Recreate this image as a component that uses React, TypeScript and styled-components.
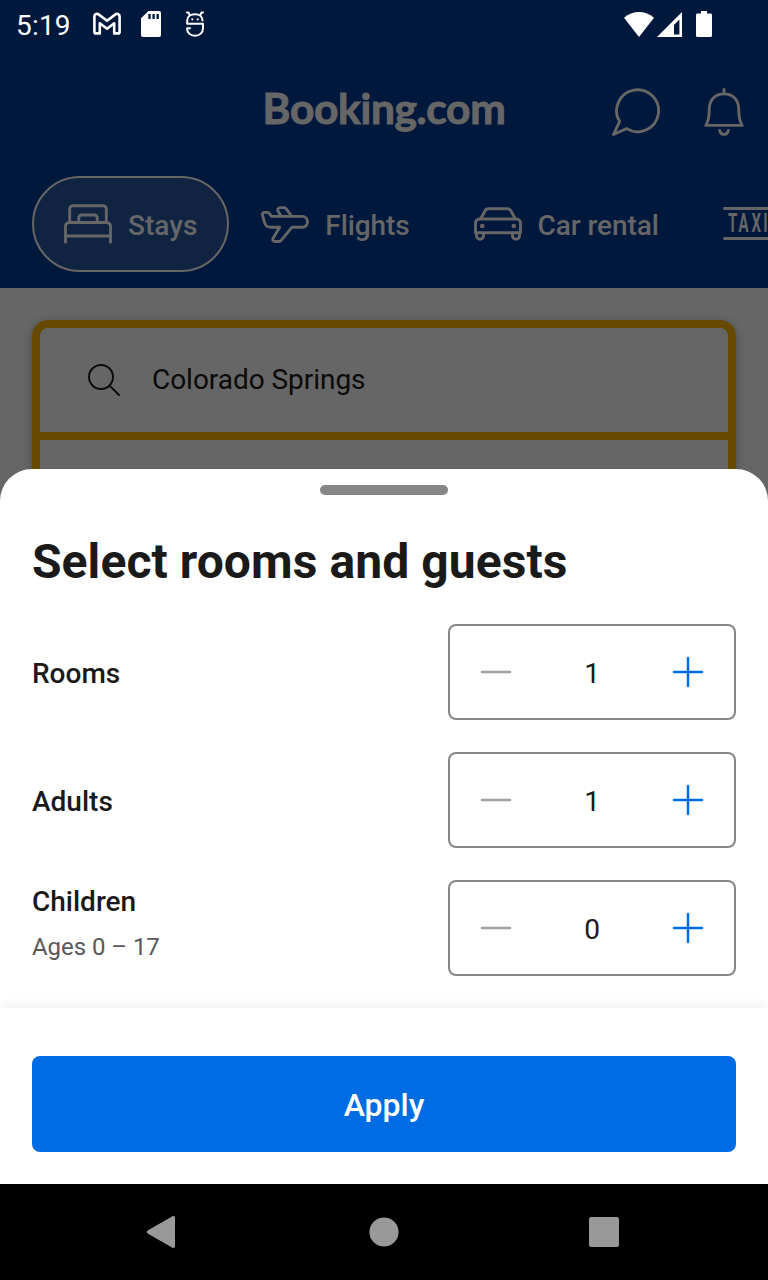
import React, { useState } from "react";
import styled, { createGlobalStyle } from "styled-components";

const GlobalStyle = createGlobalStyle`
  * { box-sizing: border-box; }
  body { margin: 0; background: #000; font-family: Roboto, "Liberation Sans", sans-serif; }
  svg { display: block; flex: none; }
`;

const Screen = styled.div`
  position: relative;
  display: flex;
  flex-direction: column;
  width: 768px;
  height: 1280px;
  overflow: hidden;
  background: #666666;
`;

const Backdrop = styled.div`
  flex: 1;
  min-height: 0;
  overflow: hidden;
`;

const Header = styled.header`
  height: 288px;
  background: #00183c;
  color: #666666;
`;

const StatusBar = styled.div`
  display: flex;
  align-items: center;
  justify-content: space-between;
  height: 48px;
  padding: 0 56px 0 16px;
  color: #fff;
`;

const StatusGroup = styled.div<{ $gap?: number }>`
  display: flex;
  align-items: center;
  gap: ${(p) => p.$gap ?? 0}px;
`;

const Clock = styled.span`
  width: 77px;
  padding-top: 3px;
  font-size: 28px;
  line-height: 45px;
  letter-spacing: 0.2px;
`;

const TopBar = styled.div`
  display: grid;
  grid-template-columns: 1fr 260px 1fr;
  align-items: center;
  height: 128px;
  padding: 0 20px;
`;

const Logo = styled.h1`
  grid-column: 2;
  margin: 0 0 8px;
  font-family: Lato, sans-serif;
  font-size: 42.5px;
  line-height: 56px;
  font-weight: 700;
  letter-spacing: -0.35px;
  text-align: center;
  white-space: nowrap;
  -webkit-text-stroke: 1px currentColor;
`;

const TopActions = styled.div`
  display: flex;
  justify-content: flex-end;
  gap: 40px;
`;

const Tabs = styled.nav`
  display: flex;
  width: 900px;
  padding-left: 32px;
`;

const Tab = styled.div<{ $active?: boolean }>`
  display: flex;
  align-items: center;
  gap: 16px;
  height: 96px;
  padding: 0 ${(p) => (p.$active ? "30px" : "32px")};
  border: ${(p) => (p.$active ? "2px solid #666666" : "0")};
  border-radius: 48px;
  background: ${(p) => (p.$active ? "#102442" : "transparent")};
  letter-spacing: ${(p) => (p.$active ? "0" : "-0.08px")};
  font-size: 28px;
  font-weight: 500;
  line-height: 40px;
  white-space: nowrap;
`;

const TabLabel = styled.span`
  padding-top: 3px;
`;

const SearchCard = styled.section`
  margin: 32px 32px 0;
  height: 300px;
  border: 8px solid #664900;
  border-radius: 16px;
  box-shadow: 0 2px 8px rgba(0, 0, 0, 0.3);
`;

const SearchField = styled.div`
  display: flex;
  align-items: center;
  gap: 32px;
  height: 112px;
  padding-left: 48px;
  border-bottom: 8px solid #664900;
  color: #0a0a0a;
  font-size: 28px;
  line-height: 40px;
  letter-spacing: -0.04px;
`;

const Sheet = styled.section`
  position: absolute;
  left: 0;
  right: 0;
  bottom: 96px;
  height: 715px;
  display: flex;
  flex-direction: column;
  padding-top: 16px;
  border-radius: 32px 32px 0 0;
  background: #fff;
  color: #1a1a1a;
`;

const Handle = styled.div`
  width: 128px;
  height: 10px;
  margin: 0 auto;
  border-radius: 5px;
  background: #868686;
`;

const Title = styled.h2`
  margin: 39px 32px 34px;
  font-size: 48px;
  line-height: 56px;
  font-weight: 700;
  letter-spacing: 0.07px;
`;

const Rows = styled.div`
  display: flex;
  flex-direction: column;
  gap: 32px;
  padding: 0 32px 32px;
`;

const Row = styled.div`
  display: flex;
  align-items: center;
  justify-content: space-between;
  height: 96px;
`;

const RowText = styled.div<{ $tall: boolean }>`
  padding: ${(p) => (p.$tall ? "0 0 9px" : "3px 0 0")};
`;

const Label = styled.div`
  font-size: 28px;
  line-height: 40px;
  font-weight: 500;
`;

const Hint = styled.div`
  margin-top: 7px;
  color: #595959;
  font-size: 24px;
  line-height: 36px;
  letter-spacing: -0.05px;
`;

const Stepper = styled.div`
  display: grid;
  grid-template-columns: 92px 1fr 92px;
  align-items: center;
  width: 288px;
  height: 96px;
  border: 2px solid #868686;
  border-radius: 8px;
`;

const StepButton = styled.button<{ $muted?: boolean }>`
  display: flex;
  align-items: center;
  justify-content: center;
  height: 92px;
  padding: 0;
  border: 0;
  background: none;
  color: ${(p) => (p.$muted ? "#a2a2a2" : "#006ce4")};
`;

const Count = styled.span`
  padding-top: 3px;
  font-size: 28px;
  line-height: 40px;
  text-align: center;
`;

const Footer = styled.footer`
  flex: 1;
  padding: 48px 32px 32px;
  background: #fff;
  box-shadow: 0 0 12px rgba(0, 0, 0, 0.09);
`;

const ApplyButton = styled.button`
  width: 100%;
  height: 96px;
  padding: 2px 0 0;
  border: 0;
  border-radius: 8px;
  background: #006ce4;
  color: #fff;
  font: 500 32px/48px Roboto, sans-serif;
`;

const NavBar = styled.div`
  display: flex;
  align-items: center;
  justify-content: space-between;
  height: 96px;
  padding: 0 149px 0 146px;
  background: #000;
`;

const line = (w: number) => ({
  fill: "none",
  stroke: "currentColor",
  strokeWidth: w,
  strokeLinecap: "round" as const,
  strokeLinejoin: "round" as const,
});

const MailIcon = () => (
  <svg width="28" height="24" viewBox="0 0 28 24" {...line(2.6)}>
    <path d="M1.400 4.500C1.400 1.900 4.200 1.200 5.900 2.600L14 8.800l8.100-6.200c1.700-1.400 4.500-.7 4.500 1.900v15.400c0 .9-.7 1.500-1.500 1.500h-3.900V11.200L14 16.700l-7.200-5.500v10.200H2.900c-.8 0-1.500-.6-1.500-1.500z" />
  </svg>
);

const SdIcon = () => (
  <svg width="20" height="26" viewBox="0 0 20 26">
    <path fill="#fff" d="M7.500 0H18a2 2 0 0 1 2 2v22a2 2 0 0 1-2 2H2a2 2 0 0 1-2-2V7.200z" />
    <path stroke="#00183c" strokeWidth="2.300" d="M8.500 3v5M12.600 3v5M16.700 3v5" />
  </svg>
);

const MascotIcon = () => (
  <svg width="18" height="26" viewBox="0 0 18 26" {...line(2)}>
    <path d="M16.500 9.600C16.500 5.500 13.300 3.200 9 3.200S1.200 5.500 1.200 9.600v3.200H17v4.400c0 4.400-3.300 7.600-8 7.600s-8-3.200-8-7.600h3" />
    <path strokeWidth="1.900" d="M1 1.500h1.500L3.700 4M17 1.500h-1.500L14.300 4" />
    <path d="M6.300 8.300v.1M11.700 8.300v.1" />
  </svg>
);

const WifiIcon = () => (
  <svg width="30" height="25" viewBox="0 0 30 25" fill="#fff">
    <path d="M0 5.800C8.500-1.900 21.500-1.900 30 5.800L15 25z" />
  </svg>
);

const SignalIcon = () => (
  <svg width="25" height="25" viewBox="0 0 25 25" fill="#fff">
    <path fillRule="evenodd" d="M25 0v25H0zM22.400 7.500L17 13v9.500h5.400z" />
  </svg>
);

const BatteryIcon = () => (
  <svg width="16" height="26" viewBox="0 0 16 26" fill="#fff">
    <path d="M5 0h6v2.600h3.500c.9 0 1.500.6 1.500 1.500v20.400c0 .9-.6 1.500-1.500 1.500h-13C.6 26 0 25.400 0 24.500V4.100c0-.9.6-1.500 1.500-1.500H5z" />
  </svg>
);

const ChatIcon = () => (
  <svg width="48" height="48" viewBox="0 0 48 48" {...line(2.9)}>
    <path d="M14.500 40.600A21 21 0 1 0 7.600 33.600L1.500 46.500z" />
  </svg>
);

const BellIcon = () => (
  <svg width="48" height="48" viewBox="0 0 48 48" {...line(2.9)}>
    <path d="M24 1.500v4.300M9.300 20.700C9.300 11.800 15.200 5.900 24 5.900s14.700 5.900 14.700 14.800c0 8.500 1.200 13 3.500 16.700H5.800c2.300-3.700 3.500-8.200 3.500-16.700zM19.700 42.500c.5 2.700 2.200 4 4.300 4s3.800-1.300 4.300-4" />
  </svg>
);

const BedIcon = () => (
  <svg width="48" height="48" viewBox="0 0 48 48" {...line(2.9)}>
    <path d="M5.700 22.500V8.800a3 3 0 0 1 3-3h30.600a3 3 0 0 1 3 3v13.700M14.700 22.500V18a3 3 0 0 1 3-3h12.600a3 3 0 0 1 3 3v4.500M1.500 42.300v-16a3.800 3.800 0 0 1 3.800-3.800h37.400a3.800 3.800 0 0 1 3.800 3.800v16M1.500 36h45" />
  </svg>
);

const PlaneIcon = () => (
  <svg width="48" height="48" viewBox="0 0 48 48" {...line(2.9)}>
    <path d="M10.600 16.400L8.200 13.400c-.5-.7-1.100-1-1.900-1H3.700c-1.600 0-2.600 1.200-2.200 2.700l2.200 7.700c.9 3 2.800 4.400 6 4.400h8.900l-6.500 11c-1 1.700.1 3.300 2 3.300h3.800c1 0 1.800-.4 2.500-1.300l10.600-13h10.200c3.200 0 5.300-2.300 5.300-5.400s-2.100-5.400-5.300-5.400zM20.300 16.400l-3.200-5.200c-1-1.700.1-3.600 2.100-3.600h3.700c1 0 1.800.4 2.400 1.200l5.500 7.600" />
  </svg>
);

const CarIcon = () => (
  <svg width="48" height="48" viewBox="0 0 48 48" {...line(2.9)}>
    <path d="M6.800 18.700l4-7.500c.8-1.600 1.900-2.400 3.600-2.400h19.200c1.700 0 2.800.8 3.600 2.400l4 7.500M5.500 19h37a4 4 0 0 1 4 4v9.800h-45V23a4 4 0 0 1 4-4zM2.500 32.800v2.900a3.500 3.500 0 0 0 7 0v-2.900M38.500 32.800v2.900a3.500 3.500 0 0 0 7 0v-2.900" />
    <circle cx="8.200" cy="26" r="2.300" fill="currentColor" stroke="none" />
    <circle cx="39.800" cy="26" r="2.300" fill="currentColor" stroke="none" />
  </svg>
);

const TaxiIcon = () => (
  <svg width="48" height="48" viewBox="0 0 48 48">
    <path {...line(2.9)} d="M1.500 8.500h45M1.500 38.500h45" />
    <text transform="scale(0.6 1)" x="8.5 26 47.300 67" y="32.500" fontSize="25" fontWeight="700" letterSpacing="0" fill="currentColor">TAXI</text>
  </svg>
);

const SearchIcon = () => (
  <svg width="32" height="32" viewBox="0 0 32 32" {...line(1.900)}>
    <circle cx="13" cy="13" r="12" />
    <path d="M21.800 21.800L31 31" />
  </svg>
);

const MinusIcon = () => (
  <svg width="32" height="32" viewBox="0 0 32 32" {...line(2.500)}>
    <path d="M2 16h28" />
  </svg>
);

const PlusIcon = () => (
  <svg width="32" height="32" viewBox="0 0 32 32" {...line(2.500)}>
    <path d="M2 16h28M16 2v28" />
  </svg>
);

const BackIcon = () => (
  <svg width="33" height="32" viewBox="0 0 33 32" fill="#999">
    <path d="M1.600 14.600L26.500.300c1.200-.700 2.500 0 2.500 1.400v28.600c0 1.400-1.300 2.100-2.500 1.400L1.600 17.400c-1.200-.700-1.200-2.100 0-2.800z" />
  </svg>
);

const HomeIcon = () => (
  <svg width="30" height="30" viewBox="0 0 30 30">
    <circle cx="15" cy="15" r="14.600" fill="#999" />
  </svg>
);

const RecentIcon = () => (
  <svg width="30" height="30" viewBox="0 0 30 30">
    <rect width="30" height="30" rx="2.500" fill="#999" />
  </svg>
);

const BatterySlot = styled.div`
  margin-left: 11px;
`;

const MascotSlot = styled.div`
  margin-left: 5px;
`;

type CounterProps = { label: string; hint?: string; min: number };

const Counter = ({ label, hint, min }: CounterProps) => {
  const [value, setValue] = useState(min);
  return (
    <Row>
      <RowText $tall={Boolean(hint)}>
        <Label>{label}</Label>
        {hint && <Hint>{hint}</Hint>}
      </RowText>
      <Stepper>
        <StepButton
          aria-label={`Fewer ${label}`}
          $muted={value === min}
          onClick={() => setValue(Math.max(min, value - 1))}
        >
          <MinusIcon />
        </StepButton>
        <Count>{value}</Count>
        <StepButton aria-label={`More ${label}`} onClick={() => setValue(value + 1)}>
          <PlusIcon />
        </StepButton>
      </Stepper>
    </Row>
  );
};

export default function App() {
  return (
    <Screen>
      <GlobalStyle />
      <Backdrop>
        <Header>
          <StatusBar>
            <StatusGroup>
              <Clock>5:19</Clock>
              <StatusGroup $gap={20}>
                <MailIcon />
                <SdIcon />
                <MascotSlot><MascotIcon /></MascotSlot>
              </StatusGroup>
            </StatusGroup>
            <StatusGroup $gap={3}>
              <WifiIcon />
              <SignalIcon />
              <BatterySlot><BatteryIcon /></BatterySlot>
            </StatusGroup>
          </StatusBar>
          <TopBar>
            <Logo>Booking.com</Logo>
            <TopActions>
              <ChatIcon />
              <BellIcon />
            </TopActions>
          </TopBar>
          <Tabs>
            <Tab $active><BedIcon /><TabLabel>Stays</TabLabel></Tab>
            <Tab><PlaneIcon /><TabLabel>Flights</TabLabel></Tab>
            <Tab><CarIcon /><TabLabel>Car rental</TabLabel></Tab>
            <Tab><TaxiIcon /></Tab>
          </Tabs>
        </Header>
        <SearchCard>
          <SearchField>
            <SearchIcon />
            Colorado Springs
          </SearchField>
        </SearchCard>
      </Backdrop>
      <Sheet>
        <Handle />
        <Title>Select rooms and guests</Title>
        <Rows>
          <Counter label="Rooms" min={1} />
          <Counter label="Adults" min={1} />
          <Counter label="Children" hint="Ages 0 – 17" min={0} />
        </Rows>
        <Footer>
          <ApplyButton>Apply</ApplyButton>
        </Footer>
      </Sheet>
      <NavBar>
        <BackIcon />
        <HomeIcon />
        <RecentIcon />
      </NavBar>
    </Screen>
  );
}
